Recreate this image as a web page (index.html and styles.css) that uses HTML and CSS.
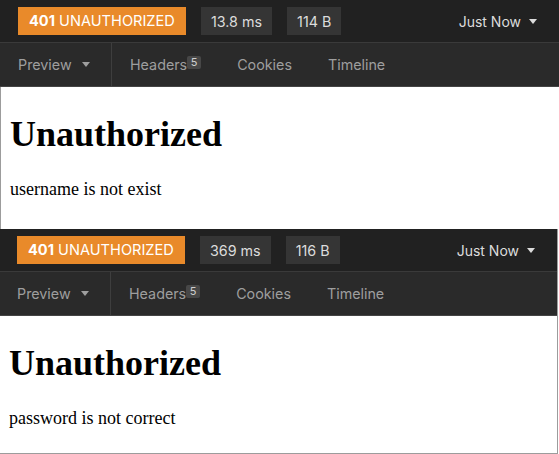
FILE: index.html
```html
<!DOCTYPE html>
<html>
<head>
<meta charset="utf-8">
<link rel="stylesheet" href="styles.css">
</head>
<body>
<section class="panel panel--first">
  <div class="bar">
    <span class="status"><b>401</b>&nbsp;UNAUTHORIZED</span>
    <span class="tag">13.8 ms</span>
    <span class="tag">114 B</span>
    <span class="when">Just Now <i class="caret"></i></span>
  </div>
  <div class="tabs">
    <span class="tab tab--preview">Preview <i class="caret"></i></span>
    <span class="tab">Headers<sup class="count">5</sup></span>
    <span class="tab">Cookies</span>
    <span class="tab">Timeline</span>
  </div>
  <div class="content">
    <h1 class="title">Unauthorized</h1>
    <p class="msg">username is not exist</p>
  </div>
</section>
<section class="panel panel--second">
  <div class="bar">
    <span class="status"><b>401</b>&nbsp;UNAUTHORIZED</span>
    <span class="tag">369 ms</span>
    <span class="tag">116 B</span>
    <span class="when">Just Now <i class="caret"></i></span>
  </div>
  <div class="tabs">
    <span class="tab tab--preview">Preview <i class="caret"></i></span>
    <span class="tab">Headers<sup class="count">5</sup></span>
    <span class="tab">Cookies</span>
    <span class="tab">Timeline</span>
  </div>
  <div class="content">
    <h1 class="title">Unauthorized</h1>
    <p class="msg">password is not correct</p>
  </div>
</section>
</body>
</html>
```
FILE: styles.css
```css
html, body {
  margin: 0;
  padding: 0;
  background: #fff;
}
.panel {
  display: flex;
  flex-direction: column;
  font-family: Inter, "Liberation Sans", sans-serif;
  font-size: 14.3px;
}
.panel--first {
  width: 559px;
  height: 229px;
}
.panel--second {
  width: 557px;
  height: 224px;
  border-right: 1px solid #9c9c9c;
  border-bottom: 1px solid #9c9c9c;
}
.bar {
  height: 42px;
  flex: none;
  display: flex;
  align-items: center;
  gap: 15px;
  padding: 0 22px 0 17px;
  background: #212121;
  border-bottom: 1px solid #3a3a3a;
}
.panel--first .bar {
  padding-left: 18px;
}
.status {
  width: 146px;
  height: 28px;
  display: flex;
  align-items: center;
  padding: 0 11px;
  background: #e98a2a;
  color: #fff;
  font-size: 14.6px;
  white-space: nowrap;
}
.status b {
  font-weight: 700;
}
.tag {
  height: 28px;
  display: flex;
  align-items: center;
  padding: 0 10px;
  background: #353535;
  color: #dcdcdc;
  font-size: 14.3px;
}
.when {
  margin-left: auto;
  display: flex;
  align-items: center;
  gap: 8px;
  color: #dcdcdc;
  font-size: 14px;
}
.caret {
  display: block;
  width: 0;
  height: 0;
  border-left: 4.5px solid transparent;
  border-right: 4.5px solid transparent;
  border-top: 5px solid currentColor;
}
.tabs {
  height: 43px;
  flex: none;
  display: flex;
  align-items: stretch;
  background: #2a2a2a;
  border-bottom: 1px solid #444;
}
.tab {
  display: flex;
  align-items: center;
  padding: 0 18px;
  color: #9e9e9e;
}
.tab--preview {
  width: 75px;
  padding: 0 18px 0 17px;
  gap: 10px;
  border-right: 1px solid #3e3e3e;
}
.panel--first .tab--preview {
  padding-left: 18px;
}
.count {
  align-self: flex-start;
  margin-top: 13px;
  width: 14px;
  height: 13px;
  display: flex;
  align-items: center;
  justify-content: center;
  background: #474747;
  color: #cfcfcf;
  border-radius: 2px;
  font-size: 11px;
  line-height: 1;
}
.content {
  flex: 1;
  background: #fff;
  padding: 0 9px;
  font-family: "Liberation Serif", "Times New Roman", serif;
  color: #000;
  overflow: hidden;
}
.panel--first .content {
  border-left: 1px solid #9c9c9c;
}
.title {
  font-size: 36px;
  font-weight: 700;
  margin: 26px 0 24px;
}
.msg {
  font-size: 18px;
  margin: 0;
}
```
